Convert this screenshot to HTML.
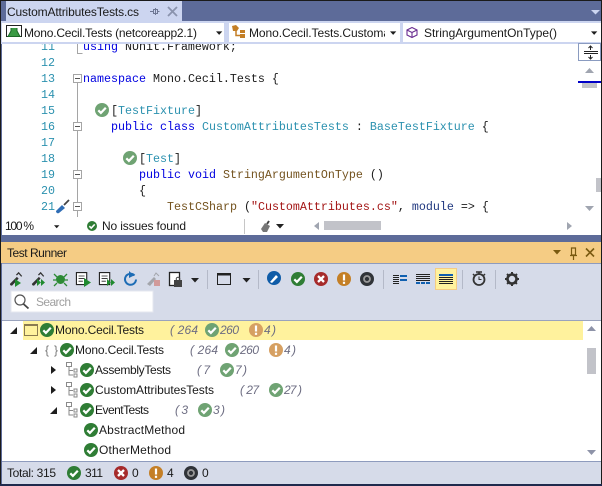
<!DOCTYPE html>
<html><head><meta charset="utf-8"><style>
html,body{margin:0;padding:0;background:#fff;width:602px;height:486px;overflow:hidden}
svg{display:block}
text{font-family:"Liberation Sans",sans-serif;font-size:12px;fill:#1a1a1a;white-space:pre}
.c text,text.c{font-family:"Liberation Mono",monospace;font-size:11.67px}
.n{fill:#2b91af}.k{fill:#0000e0}.y{fill:#2b91af}.s{fill:#a31515}.m{fill:#74531f}.v{fill:#1f377f}
.i{font-style:italic;fill:#6d6d82}
</style></head><body>
<svg width="602" height="486" viewBox="0 0 602 486" xmlns="http://www.w3.org/2000/svg">
<defs>
<symbol id="chk" viewBox="0 0 14 14" overflow="visible"><circle cx="7" cy="7" r="7" fill="#2f7d35"/><path d="M3.3 7.3l2.6 2.6 4.9-5.2" fill="none" stroke="#fff" stroke-width="2.2"/></symbol>
<symbol id="fchk" viewBox="0 0 14 14" overflow="visible"><circle cx="7" cy="7" r="7" fill="#6fa373"/><path d="M3.3 7.3l2.6 2.6 4.9-5.2" fill="none" stroke="#fff" stroke-width="2.2"/></symbol>
<symbol id="fwarn" viewBox="0 0 14 14" overflow="visible"><circle cx="7" cy="7" r="7" fill="#d6a062"/><path d="M7 2.5v6M7 9.7v2.2" stroke="#fff" stroke-width="2.2"/></symbol>
<symbol id="warn" viewBox="0 0 14 14" overflow="visible"><circle cx="7" cy="7" r="7" fill="#c47f26"/><path d="M7 2.5v6M7 9.7v2.2" stroke="#fff" stroke-width="2.2"/></symbol>
<symbol id="err" viewBox="0 0 14 14" overflow="visible"><circle cx="7" cy="7" r="7" fill="#a62b2b"/><path d="M4 4l6 6M10 4l-6 6" stroke="#fff" stroke-width="2.3"/></symbol>
<symbol id="ign" viewBox="0 0 14 14" overflow="visible"><circle cx="7" cy="7" r="7" fill="#303338"/><circle cx="7" cy="7" r="3" fill="none" stroke="#9a9a9a" stroke-width="1.8"/></symbol>
<symbol id="box" viewBox="0 0 9 9" overflow="visible"><rect x=".5" y=".5" width="8" height="8" fill="#fff" stroke="#a5a5a5"/><path d="M2 4.5h5" stroke="#555"/></symbol>
<symbol id="cls" viewBox="0 0 12 16" overflow="visible"><path d="M.5 .5h5v4h-5zM3 4.5v8.5h4M3 8.5h4" fill="none" stroke="#8a8a8a"/><path d="M8 7h3v3h-3zM8 12h3v3h-3z" fill="none" stroke="#8a8a8a"/></symbol>
<symbol id="tri" viewBox="0 0 10 6" overflow="visible"><path d="M0 0h9l-4.5 5z" fill="#1e1e1e"/></symbol>
<symbol id="pipette" viewBox="0 0 16 16" overflow="visible"><path d="M1 13.5L9 5.5l2 2L3.500 15.500A2.300 2.300 0 0 1 1 13.500z" fill="#333"/><path d="M8.500 3.500L11 1l3.500 4" fill="none" stroke="#333" stroke-width="1.500"/></symbol>
<symbol id="doc" viewBox="0 0 14 16" overflow="visible"><rect x=".5" y=".5" width="12" height="14" fill="#fff" stroke="#222" stroke-width="1.300"/><path d="M3 4.500h7M3 7.500h7M3 10.500h5" stroke="#222"/></symbol>
</defs>

<!-- window frame -->
<rect width="602" height="486" fill="#5d6b99"/>
<rect width="602" height="1" fill="#1a1a1a"/>
<rect x="0" width="1" height="486" fill="#1a1a1a"/>
<rect x="601" width="1" height="486" fill="#1a1a1a"/>
<rect y="484" width="602" height="2" fill="#1f2a4d"/>

<!-- tab -->
<rect x="6" y="1" width="176" height="20" fill="#ccd5f0"/>
<text x="7" y="16" textLength="132">CustomAttributesTests.cs</text>
<path d="M150 11.500h3M153.500 9.500h4v4h-4zM157.500 11.500h2M155.500 8v7" fill="none" stroke="#6f7894"/>
<path d="M168 7l9 9M177 7l-9 9" stroke="#8a93ad" stroke-width="1.800"/>
<path d="M591 10h9l-4.500 4.500z" fill="#ccd5f0"/>

<!-- nav bar -->
<rect x="1" y="21" width="600" height="23" fill="#ccd5f0"/>
<rect x="2" y="23" width="222" height="19" fill="#fff"/>
<rect x="229" y="23" width="171" height="19" fill="#fff"/>
<rect x="403" y="23" width="198" height="19" fill="#fff"/>
<path d="M6.500 25.500h15v11h-15z" fill="#fff" stroke="#222"/>
<path d="M11 28v3l-3 5.500h12l-3-5.500v-3" fill="#3a9a44" stroke="#1d6a28"/>
<text x="24" y="37" textLength="173">Mono.Cecil.Tests (netcoreapp2.1)</text>
<use href="#tri" x="216" y="31" width="7" height="5"/>
<path d="M232 26l4-1 3 3-2 3-4 0zM240 30h5v3h-5zM240 34h5v4h-5z" fill="#c47f26"/><path d="M236 30v5.500h5" fill="none" stroke="#c47f26" stroke-width="1.500"/>
<svg x="249" y="23" width="136" height="19"><text x="0" y="14" textLength="141">Mono.Cecil.Tests.Customa</text></svg>
<use href="#tri" x="390" y="31" width="7" height="5"/>
<path d="M412 27.500l5 2.500v5l-5 2.500-5-2.500v-5zM407 30l5 2.500 5-2.500M412 32.500v5" fill="none" stroke="#6a2d91" stroke-width="1.100"/>
<text x="424" y="37" textLength="133">StringArgumentOnType()</text>
<use href="#tri" x="591" y="31" width="7" height="5"/>

<!-- editor -->
<rect x="2" y="44" width="599" height="173" fill="#fff"/>
<rect x="2" y="217" width="599" height="18" fill="#fff"/>
<clipPath id="ed"><rect x="2" y="44" width="576" height="173"/></clipPath>
<g class="c" clip-path="url(#ed)">
<text x="41" y="50" class="n c">11</text><text x="41" y="66" class="n c">12</text><text x="41" y="82" class="n c">13</text><text x="41" y="98" class="n c">14</text><text x="41" y="114" class="n c">15</text><text x="41" y="130" class="n c">16</text><text x="41" y="146" class="n c">17</text><text x="41" y="162" class="n c">18</text><text x="41" y="178" class="n c">19</text><text x="41" y="194" class="n c">20</text><text x="41" y="210" class="n c">21</text>
<text x="83" y="50"><tspan class="k">using</tspan> NUnit.Framework;</text>
<text x="83" y="82"><tspan class="k">namespace</tspan> Mono.Cecil.Tests {</text>
<text x="111" y="114">[<tspan class="y">TestFixture</tspan>]</text>
<text x="111" y="130"><tspan class="k">public class</tspan> <tspan class="y">CustomAttributesTests</tspan> : <tspan class="y">BaseTestFixture</tspan> {</text>
<text x="139" y="162">[<tspan class="y">Test</tspan>]</text>
<text x="139" y="178"><tspan class="k">public void</tspan> <tspan class="m">StringArgumentOnType</tspan> ()</text>
<text x="139" y="194">{</text>
<text x="167" y="210"><tspan class="m">TestCSharp</tspan> (<tspan class="s">"CustomAttributes.cs"</tspan>, <tspan class="v">module</tspan> =&gt; {</text>
</g>
<path d="M77.500 44v9.500h5M77.500 74v143" fill="none" stroke="#a5a5a5"/>
<use href="#box" x="73" y="74" width="9" height="9"/>
<use href="#box" x="73" y="122" width="9" height="9"/>
<use href="#box" x="73" y="170" width="9" height="9"/>
<use href="#box" x="73" y="202" width="9" height="9"/>
<use href="#fchk" x="95" y="103" width="14" height="14"/>
<use href="#fchk" x="123" y="151" width="14" height="14"/>
<path d="M56 211l6-6 3 3-6 5a2 2 0 0 1-3-2z" fill="#2f6db5"/><path d="M64 205l5-5" stroke="#444" stroke-width="1.800"/>

<!-- editor right scrollbar -->
<rect x="578.500" y="43.500" width="22" height="17" fill="#fff" stroke="#8a9bc0"/>
<path d="M584 51.500h14M584 53.500h14" stroke="#222"/>
<path d="M590.500 46v4M590.500 55v4" stroke="#222"/><path d="M588.500 48l2-2 2 2M588.500 57l2 2 2-2" fill="none" stroke="#222"/>
<path d="M585 73l4.500-5 4.500 5z" fill="#a0a5b0"/>
<rect x="582" y="81" width="15" height="7" fill="#c2c3c9"/>
<rect x="578" y="81" width="23" height="2" fill="#0000c8"/>
<rect x="596" y="178" width="5" height="14" fill="#c2c3c9"/>
<path d="M585 206h9l-4.500 5z" fill="#a0a5b0"/>

<!-- status strip -->
<rect x="3" y="218" width="57" height="17" fill="#fff"/>
<text x="5" y="230" textLength="29">100 %</text>
<use href="#tri" x="54" y="225" width="6" height="4"/>
<use href="#chk" x="87" y="221" width="10" height="10"/>
<text x="102" y="230" textLength="84">No issues found</text>
<path d="M244.500 219v15" stroke="#c6c6c6"/>
<path d="M261 229l4-6 5 3-3 6h-4z" fill="#777"/><path d="M267 224l2-3" stroke="#444" stroke-width="2"/>
<path d="M276 224h8l-4 4.500z" fill="#222"/>
<path d="M319 222v8l-5-4z" fill="#a0a5b0"/>
<rect x="324" y="221" width="57" height="9" fill="#c2c3c9"/>
<path d="M567 222v8l5-4z" fill="#a0a5b0"/>

<!-- tool window title -->
<rect x="1" y="235" width="600" height="7" fill="#5d6b99"/>
<rect x="1" y="242" width="600" height="21" fill="#f5cc84"/>
<text x="7" y="257" textLength="60">Test Runner</text>
<path d="M553 250h8l-4 4.500z" fill="#7a5a10"/>
<path d="M571.500 248h4v7h-4zM570 255.500h7M573.500 256v4" fill="none" stroke="#7a5a10" stroke-width="1.200"/>
<path d="M586 248.500l8 8M594 248.500l-8 8" stroke="#7a5a10" stroke-width="1.600"/>

<!-- toolbar -->
<rect x="2" y="263" width="599" height="57" fill="#d6dbe9"/>
<rect x="2" y="263" width="599" height="1" fill="#8e9bbd"/>
<use href="#pipette" x="9" y="272" width="14" height="14"/><path d="M15 279v8l6-4z" fill="#1f8a2f"/>
<use href="#pipette" x="31" y="272" width="14" height="14"/><path d="M37 279v7l4-3.500zM41 279v7l4-3.500z" fill="#1f8a2f"/>
<circle cx="60.500" cy="279.500" r="4.500" fill="#2c8a35"/><path d="M54 274l3 3M67 274l-3 3M53 280h3M68 280h-3M54 286l3-3M67 286l-3-3" stroke="#2c8a35" stroke-width="1.300"/>
<use href="#doc" x="76" y="272" width="12" height="14"/><path d="M84 278v9l7-4.500z" fill="#1f8a2f"/>
<use href="#doc" x="99" y="272" width="12" height="14"/><path d="M107 279v7l4-3.500zM111 279v7l4-3.500z" fill="#1f8a2f"/>
<path d="M134.500 275.500a5.500 5.500 0 1 0 1.500 4" fill="none" stroke="#1d6cb5" stroke-width="2"/><path d="M129 271l5 4.500-5 2.500z" fill="#1d6cb5"/>
<path d="M147 284l7-7 2 2-6 7z" fill="#a3a5ab"/><path d="M154 276l2-3 3 3" fill="none" stroke="#a3a5ab"/><rect x="154" y="280" width="6" height="6" fill="#d19a9a"/>
<rect x="169.500" y="272.500" width="10" height="13" fill="#fff" stroke="#222" stroke-width="1.300"/><rect x="174" y="280" width="8" height="7" fill="#444"/><circle cx="178" cy="279" r="1.800" fill="none" stroke="#444"/>
<path d="M191 278h8l-4 4.500z" fill="#222"/>
<path d="M207.500 270v19M258.500 270v19M383.500 270v19M462.500 270v19M495.500 270v19" stroke="#b4b9c8"/>
<rect x="217.500" y="273.500" width="13" height="11" fill="none" stroke="#222"/><rect x="217" y="273" width="14" height="2.500" fill="#222"/>
<path d="M242.500 278h8l-4 4.500z" fill="#222"/>
<circle cx="274" cy="278" r="7" fill="#0f5ca8"/><path d="M270 282l6-7 2 2-6 6z" fill="#fff"/>
<use href="#chk" x="291" y="272" width="14" height="14"/>
<use href="#err" x="314" y="272" width="14" height="14"/>
<use href="#warn" x="337" y="272" width="14" height="14"/>
<use href="#ign" x="360" y="272" width="14" height="14"/>
<path d="M393 275.500h6M393 277.500h6M393 279.500h6M393 281.500h6M393 283.500h6" stroke="#222"/>
<rect x="400" y="275" width="7" height="2" fill="#1060b0"/><rect x="400" y="279" width="7" height="2" fill="#1060b0"/>
<path d="M416 274.500h14M416 276.500h14M416 278.500h14M416 280.500h14" stroke="#222"/><rect x="416" y="282" width="4" height="2" fill="#1060b0"/><rect x="421" y="282" width="4" height="2" fill="#1060b0"/><rect x="426" y="282" width="4" height="2" fill="#1060b0"/>
<rect x="435.500" y="268.500" width="21" height="21" fill="#fff29d" stroke="#f5cc84"/>
<rect x="439" y="274" width="14" height="2" fill="#1060b0"/><path d="M439 277.500h14M439 279.500h14M439 281.500h14M439 283.500h14" stroke="#222"/>
<circle cx="479" cy="279.500" r="5.500" fill="none" stroke="#333" stroke-width="1.800"/><path d="M479 276.500v3h2.500" fill="none" stroke="#333"/><path d="M476 272h6M479 272v2" stroke="#333" stroke-width="1.500"/><path d="M473 274l1.500 1.500M485 274l-1.500 1.500" stroke="#333" stroke-width="1.500"/>
<circle cx="512" cy="279" r="4.500" fill="none" stroke="#333" stroke-width="2.600"/><path d="M512 272v14M505 279h14M507 274l10 10M517 274l-10 10" stroke="#333" stroke-width="2" stroke-dasharray="2.500 9"/>
<rect x="11" y="291" width="142" height="21" fill="#fff" stroke="#e4e7ef"/>
<circle cx="20" cy="300" r="5" fill="none" stroke="#555" stroke-width="1.200"/><path d="M23.500 304l5 4.500" stroke="#444" stroke-width="1.800"/>
<text x="36" y="306" style="fill:#a0a0a0" textLength="35">Search</text>

<!-- tree -->
<rect x="2" y="320" width="599" height="141" fill="#fff"/>
<rect x="2" y="320" width="599" height="1" fill="#9aa3bd"/>
<rect x="23" y="321" width="560" height="19" fill="#fff29d"/>
<path d="M10 334l7-7v7z" fill="#1e1e1e"/>
<rect x="24.500" y="324.500" width="13" height="11" fill="none" stroke="#8a7a50"/><rect x="24" y="324" width="14" height="2" fill="#8a7a50"/>
<use href="#chk" x="40" y="323" width="14" height="14"/>
<text x="55" y="334" textLength="89">Mono.Cecil.Tests</text>
<text x="170" y="334" class="i" textLength="28">( 264</text>
<use href="#fchk" x="205" y="323" width="14" height="14"/>
<text x="220" y="334" class="i" textLength="19">260</text>
<use href="#fwarn" x="249" y="323" width="14" height="14"/>
<text x="264" y="334" class="i" textLength="12">4 )</text>

<path d="M30 354l7-7v7z" fill="#1e1e1e"/>
<text x="45" y="354" style="fill:#777" textLength="13">{ }</text>
<use href="#chk" x="60" y="343" width="14" height="14"/>
<text x="75" y="354" textLength="89">Mono.Cecil.Tests</text>
<text x="190" y="354" class="i" textLength="28">( 264</text>
<use href="#fchk" x="225" y="343" width="14" height="14"/>
<text x="240" y="354" class="i" textLength="19">260</text>
<use href="#fwarn" x="269" y="343" width="14" height="14"/>
<text x="284" y="354" class="i" textLength="12">4 )</text>

<path d="M51 366v8l5-4z" fill="#1e1e1e"/>
<use href="#cls" x="66" y="362" width="12" height="16"/>
<use href="#chk" x="80" y="363" width="14" height="14"/>
<text x="95" y="374" textLength="76">AssemblyTests</text>
<text x="197" y="374" class="i" textLength="13">( 7</text>
<use href="#fchk" x="220" y="363" width="14" height="14"/>
<text x="235" y="374" class="i" textLength="12">7 )</text>

<path d="M51 386v8l5-4z" fill="#1e1e1e"/>
<use href="#cls" x="66" y="382" width="12" height="16"/>
<use href="#chk" x="80" y="383" width="14" height="14"/>
<text x="95" y="394" textLength="119">CustomAttributesTests</text>
<text x="240" y="394" class="i" textLength="19">( 27</text>
<use href="#fchk" x="269" y="383" width="14" height="14"/>
<text x="284" y="394" class="i" textLength="18">27 )</text>

<path d="M50 414l7-7v7z" fill="#1e1e1e"/>
<use href="#cls" x="66" y="402" width="12" height="16"/>
<use href="#chk" x="80" y="403" width="14" height="14"/>
<text x="95" y="414" textLength="54">EventTests</text>
<text x="175" y="414" class="i" textLength="13">( 3</text>
<use href="#fchk" x="198" y="403" width="14" height="14"/>
<text x="213" y="414" class="i" textLength="12">3 )</text>

<use href="#chk" x="84" y="423" width="14" height="14"/>
<text x="99" y="434" textLength="86">AbstractMethod</text>
<use href="#chk" x="84" y="443" width="14" height="14"/>
<text x="99" y="454" textLength="72">OtherMethod</text>

<!-- tree scrollbar -->
<path d="M587 331l4.500-5 4.500 5z" fill="#8e93a8"/>
<rect x="587" y="348" width="9" height="26" fill="#c2c3c9"/>
<path d="M587 450h9l-4.500 5z" fill="#8e93a8"/>

<!-- bottom bar -->
<rect x="2" y="461" width="599" height="23" fill="#d6dbe9"/>
<rect x="2" y="461" width="599" height="1" fill="#8e9bbd"/>
<text x="7" y="477" textLength="49">Total: 315</text>
<use href="#chk" x="67" y="466" width="14" height="14"/>
<text x="85" y="477" textLength="18">311</text>
<use href="#err" x="114" y="466" width="14" height="14"/>
<text x="132" y="477">0</text>
<use href="#warn" x="149" y="466" width="14" height="14"/>
<text x="167" y="477">4</text>
<use href="#ign" x="184" y="466" width="14" height="14"/>
<text x="202" y="477">0</text>
</svg>
</body></html>
